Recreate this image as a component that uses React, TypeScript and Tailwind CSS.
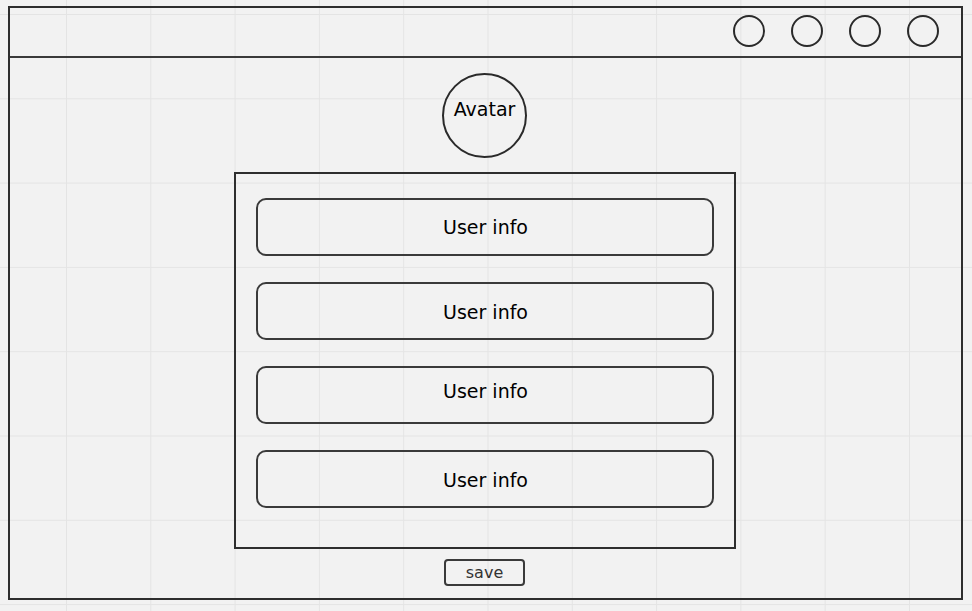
import React from "react";

// small per-row text nudges, as in the sketch
const fields = [
  { label: "User info", nudge: "pt-0" },
  { label: "User info", nudge: "pt-[2px]" },
  { label: "User info", nudge: "pb-[8px]" },
  { label: "User info", nudge: "pt-[2px]" },
];

const App: React.FC = () => {
  return (
    <div
      className="w-[972px] h-[611px] overflow-hidden bg-[#f2f2f2] bg-[linear-gradient(to_right,#e4e4e4_1px,transparent_1px),linear-gradient(to_bottom,#e4e4e4_1px,transparent_1px)] bg-[size:84.3px_84.3px] bg-[position:66px_14px] pt-[6px] pl-[8px] text-black"
      style={{ fontFamily: '"DejaVu Sans", Verdana, sans-serif' }}
    >
      <div className="w-[955px] h-[594px] border-2 border-[#2e2e2e] flex flex-col">
        {/* top bar */}
        <div className="h-[50px] border-b-2 border-[#3a3a3a] flex items-center justify-end gap-[26px] pr-[22px] pb-[2px]">
          {[0, 1, 2, 3].map((i) => (
            <div
              key={i}
              className="w-[32px] h-[32px] rounded-full border-2 border-[#2a2a2a]"
            />
          ))}
        </div>

        <div className="flex flex-col items-center pr-[2px]">
          <div className="mt-[15px] w-[85px] h-[85px] rounded-full border-2 border-[#2a2a2a] flex items-center justify-center pb-[12px] text-[19px]">
            Avatar
          </div>

          <div className="mt-[14px] w-[502px] h-[377px] border-2 border-[#2e2e2e] flex flex-col gap-[26px] pt-[24px] px-[20px]">
            {fields.map((f, i) => (
              <div
                key={i}
                className={`h-[58px] rounded-[10px] border-2 border-[#3a3a3a] flex items-center justify-center pl-[2px] text-[19px] ${f.nudge}`}
              >
                {f.label}
              </div>
            ))}
          </div>

          <button className="mt-[10px] w-[81px] h-[27px] rounded-[4px] border-2 border-[#3a3a3a] flex items-center justify-center text-[16px] text-[#333] leading-none">
            save
          </button>
        </div>
      </div>
    </div>
  );
};

export default App;
